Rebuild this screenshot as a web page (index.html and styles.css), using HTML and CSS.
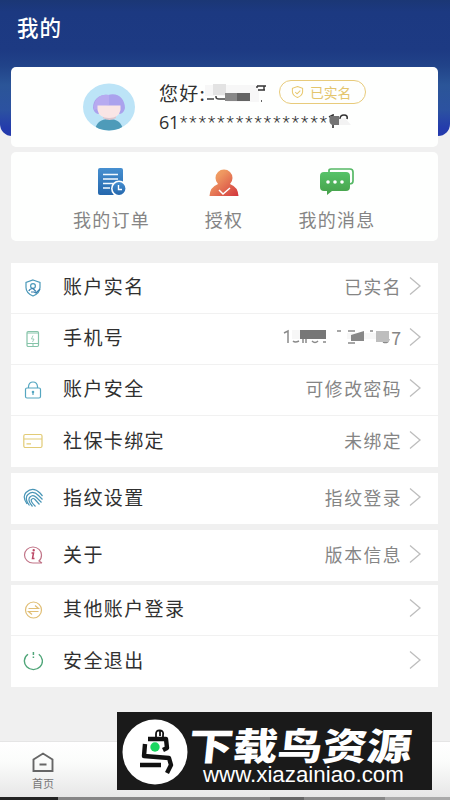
FILE: index.html
```
<!DOCTYPE html>
<html lang="zh-CN">
<head>
<meta charset="UTF-8">
<title>我的</title>
<link rel="stylesheet" href="styles.css">
</head>
<body>
<svg class="defs" width="0" height="0">
  <defs>
    <linearGradient id="blue" x1="0" y1="0" x2="0" y2="1"><stop offset="0" stop-color="#468fd0"/><stop offset="1" stop-color="#2467ac"/></linearGradient>
    <linearGradient id="red" x1="0" y1="0" x2="1" y2="1"><stop offset="0" stop-color="#f3a763"/><stop offset=".3" stop-color="#ee9660"/><stop offset="1" stop-color="#d2353c"/></linearGradient>
    <linearGradient id="green" x1="0" y1="0" x2="0" y2="1"><stop offset="0" stop-color="#57c269"/><stop offset="1" stop-color="#45a049"/></linearGradient>
    <symbol id="arrow" viewBox="0 0 12 20"><path d="M1 1.500 11 10 1 18.500" fill="none" stroke="#bdbdbd" stroke-width="1.300"/></symbol>
  </defs>
</svg>
<div class="screen">
  <header class="hero"><h1>我的</h1></header>
  <main>
    <section class="card profile">
      <svg class="avatar" viewBox="0 0 52 48">
        <clipPath id="face"><ellipse cx="26" cy="24" rx="26" ry="23.5"/></clipPath>
        <g clip-path="url(#face)">
          <rect width="52" height="48" fill="#bce4f7"/>
          <path d="M12 48Q13 36 26 36T40 48Z" fill="#4e9bb9"/>
          <path d="M20 31h13v4q-6.500 4-13 0z" fill="#dcc6ce"/>
          <path d="M10 25C10 16 17 11 25 12C35 9 42 16 42 25Q41 30 37 31H15Q11 30 10 25Z" fill="#aaa2ed"/>
          <path d="M26 12Q16 10 12 19Q10 23 11 27L26 22Z" fill="#b7aaf0"/>
          <path d="M14.500 22.500H37.500V27Q36 35 26 35T14.500 27Z" fill="#f9e5e5"/>
        </g>
      </svg>
      <div class="identity">
        <div class="nameline">
          <span class="hello">您好:</span>
          <svg class="name-mask" viewBox="0 0 64 22">
            <path d="M4 13h6M4 17h7M13 10v5q0 2 3 2h6" stroke="#444" stroke-width="1.500" fill="none"/>
            <path d="M2 3h54v17H24v-6H2z" fill="#f7f7f7"/>
            <rect x="10" y="2" width="13" height="11" fill="#e3e3e3"/>
            <rect x="22" y="11" width="25" height="8" fill="#888"/><rect x="34" y="11" width="13" height="8" fill="#646464"/>
            <path d="M54 4h9M55 8h7M54 4v2M61 4v4M58 19h1" stroke="#333" stroke-width="1.400" fill="none"/>
          </svg>
          <span class="verified"><svg viewBox="0 0 14 14"><path d="M7 1 12.500 3v4Q12 11 7 13 2 11 1.500 7V3Z M4.500 7l2 2 3.500-3.500" fill="none" stroke="#e8c76c" stroke-width="1.100"/></svg>已实名</span>
        </div>
        <div class="idline"><span>61</span><span class="stars">****************</span><svg viewBox="0 0 24 16"><path d="M2 3l4-2v13M13 5q0-4 4-4t3 4" fill="none" stroke="#333" stroke-width="1.600"/><path d="M3 2h9v9H5q-4-2-2-9z" fill="#747474"/><path d="M12 5l6-1 6 7H12z" fill="#f3f3f3"/></svg></div>
      </div>
    </section>
    <section class="card actions">
      <div class="action orders"><svg viewBox="0 0 30 30"><rect x="1" y="1" width="25" height="27" rx="2" fill="url(#blue)"/><path d="M6 7.500h15M6 12h15M6 16.500h10M6 21h7" stroke="#f4faff" stroke-width="1.500"/><circle cx="22" cy="21.500" r="8" fill="#fff"/><circle cx="22" cy="21.500" r="6.400" fill="url(#blue)"/><path d="M21.500 18v4.500H25" fill="none" stroke="#fff" stroke-width="1.400"/></svg><span>我的订单</span></div>
      <div class="action grant"><svg viewBox="0 0 30 30"><path d="M0.500 29Q1 20 9 17A8.500 8.500 0 1 1 21 17Q29 20 29.500 29Z" fill="url(#red)"/><path d="M10 23l4 4 7-6" fill="none" stroke="#fff" stroke-width="1.500"/></svg><span>授权</span></div>
      <div class="action messages"><svg viewBox="0 0 36 30"><path d="M10 5V3.500Q10 2 12 2h19q3 0 3 3v9q0 3-4 3" fill="none" stroke="#56b966" stroke-width="1.700"/><path d="M5 5h22q4 0 4 4v11q0 4-4 4H13l-5 4v-4H5q-4 0-4-4V9q0-4 4-4z" fill="url(#green)"/><g fill="#fff"><circle cx="9" cy="15" r="1.800"/><circle cx="16" cy="15" r="1.800"/><circle cx="23" cy="15" r="1.800"/></g></svg><span>我的消息</span></div>
    </section>
    <section class="group first">
      <div class="row"><svg class="icon" viewBox="0 0 20 20" stroke="#4b99b9"><path d="M10 2 17 4.500v5Q17 15 10 18 3 15 3 9.500v-5Z"/><circle cx="10" cy="8" r="2.400"/><path d="M5.800 13Q7 10.500 10 10.500L13 13.500M8 14h3l2 1 4-4" stroke="#397fad"/></svg><span class="label">账户实名</span><span class="value">已实名</span><svg class="arrow"><use href="#arrow"/></svg></div>
      <div class="row"><svg class="icon" viewBox="0 0 20 20" stroke="#86c4a9"><rect x="4" y="2.500" width="11.500" height="15" rx="1.200"/><path d="M4 4h11.500M4 14.500h11.500M9 16h2" /><path d="M10 6.500 8.500 10H11l-1.500 3" stroke-width=".8"/></svg><span class="label">手机号</span>
        <svg class="phone-mask" viewBox="0 0 108 20"><path d="M1 6l4-2v12M10 14q2 2 6 0M20 12v4M23 12v4M29 14q3 3 6 0M40 15h3M54 4h4M65 4h7M65 16h7M87 4h3M100 15q5 2 6-3" fill="none" stroke="#8a8a8a" stroke-width="1.500"/><path d="M9 3h34v9H9zM64 6h32v6H64z" fill="#f7f7f7"/><rect x="17" y="3" width="26" height="9" fill="#777"/><path d="M68 8l13-4v10H68z" fill="#888"/><rect x="93" y="4" width="13" height="11" fill="#bebebe"/></svg>
        <span class="digit">7</span><svg class="arrow"><use href="#arrow"/></svg></div>
      <div class="row"><svg class="icon" viewBox="0 0 20 20" stroke="#55a6c0"><rect x="2.500" y="8" width="15" height="10" rx="1.500"/><path d="M5.500 8V6.500Q6 2 10 2t4.500 4.500V8M10 12v3"/><circle cx="10" cy="12" r=".7"/></svg><span class="label">账户安全</span><span class="value">可修改密码</span><svg class="arrow"><use href="#arrow"/></svg></div>
      <div class="row"><svg class="icon" viewBox="0 0 20 20" stroke="#e2cb76"><rect x=".8" y="3.500" width="18.200" height="13" rx="1.500"/><path d="M1 8h18M3.500 12.800h4.500"/></svg><span class="label">社保卡绑定</span><span class="value">未绑定</span><svg class="arrow"><use href="#arrow"/></svg></div>
    </section>
    <section class="group finger">
      <div class="row"><svg class="icon" viewBox="0 0 20 20" stroke="#4995b6"><path d="M4 16Q-1 9 3 4.500Q10-2 17 5L19.500 8M6.500 17.500Q1 10 5 6.500Q10 2 15.500 7.500L19.500 11.500M9.500 18.500Q4 12 7 9Q10 6 13.500 9.500L18.500 14.500M12.500 18.500Q7 13 8.500 11.500Q10 9.500 12 11.500L16.500 16.500"/></svg><span class="label">指纹设置</span><span class="value">指纹登录</span><svg class="arrow"><use href="#arrow"/></svg></div>
    </section>
    <section class="group about">
      <div class="row"><svg class="icon" viewBox="0 0 20 20" stroke="#c17588"><path d="M19 18H10A8.500 8 0 1 1 18.500 10Q18.500 14 16 16L19 18"/><path d="M8.500 8H10.500L9.500 13.500H11.500" stroke="#bc4866" stroke-width="1.500"/><circle cx="10.700" cy="5.300" r=".6" stroke="#bc4866"/></svg><span class="label">关于</span><span class="value">版本信息</span><svg class="arrow"><use href="#arrow"/></svg></div>
    </section>
    <section class="group last">
      <div class="row"><svg class="icon" viewBox="0 0 20 20" stroke="#e0be75"><circle cx="10.500" cy="10" r="8"/><path d="M5.500 8.500h10L12 5.500M15.500 11.500h-10L9 14.500"/></svg><span class="label">其他账户登录</span><svg class="arrow"><use href="#arrow"/></svg></div>
      <div class="row"><svg class="icon" viewBox="0 0 20 20" stroke="#4fa578"><path d="M5 3.300A9 8.500 0 1 0 15.800 3.300" stroke-width="1.400"/><path d="M10.400 1v3M10.400 5.500v1.500" stroke-width="1.500"/></svg><span class="label">安全退出</span><svg class="arrow"><use href="#arrow"/></svg></div>
    </section>
  </main>
  <nav class="tabs"><div class="tab"><svg viewBox="0 0 22 21"><path d="M1.500 7.500 11 1.500l9.500 6V19h-19ZM7.500 12.500h7" fill="none" stroke="#666" stroke-width="1.900"/></svg><span>首页</span></div></nav>
  <div class="edge"></div>
  <div class="banner">
    <svg class="bird" viewBox="0 0 66 66"><circle cx="33" cy="33" r="32.500" fill="#fff"/><g fill="none" stroke="#111" stroke-linejoin="round"><path d="M34 18v-3q0-4 4-3.500t3 4.500v3M38 12v5" stroke-width="1.800"/><path d="M26 20H44L45 29 41 31M23 25 22 37 47 39 49 46 45 54M18 46H39" stroke-width="4.400"/></g><circle cx="33" cy="28" r="4.700" fill="#1bd760"/></svg>
    <div class="brand"><strong>下载鸟资源</strong><span>www.xiazainiao.com</span></div>
  </div>
</div>
</body>
</html>
```
FILE: styles.css
```
* { box-sizing: border-box; }
body { margin: 0; background: #f0f0f0; font-family: "Noto Sans CJK SC", sans-serif; color: #303030; }
svg { display: block; flex: none; }
.defs { position: absolute; }
.screen { position: relative; width: 450px; height: 800px; overflow: hidden; display: flex; flex-direction: column; }
.hero { flex: none; height: 136px; margin-bottom: -69px; padding: 11px 17px; border-radius: 0 0 12px 12px; background: linear-gradient(#1b3775 0, #1c3981 12px, #1d3a83 50px, #214389 66px, #2b5598 85px, #2c52a0 110px, #243cac 128px, #2439ad 136px); }
h1 { margin: 0; color: #fff; font-size: 21.5px; line-height: 32px; letter-spacing: 1px; font-weight: 500; }
main { position: relative; padding: 0 12px 0 11px; }
.card { background: #fefffe; border-radius: 5px; }
.profile { height: 80px; display: flex; padding: 16px 0 0 72px; }
.avatar { width: 52px; height: 48px; }
.identity { padding-left: 24px; }
.nameline { display: flex; height: 23px; margin-top: -3px; }
.hello { width: 44px; font-size: 19px; line-height: 25px; letter-spacing: 1.2px; white-space: nowrap; }
.name-mask { width: 64px; height: 22px; margin-top: 2px; }
.verified { display: flex; align-items: center; width: 87px; height: 24px; margin-left: 12px; padding-left: 11px; border: 1.3px solid #e8cb7b; border-radius: 12px; color: #e4c56d; font-size: 13.8px; line-height: 20px; padding-bottom: 1px; letter-spacing: 0; white-space: nowrap; }
.verified svg { width: 13px; height: 14px; margin-right: 6px; }
.idline { display: flex; height: 28px; margin-top: 5px; font-size: 18px; line-height: 28px; }
.idline > span:first-child { width: 21px; font-size: 18px; letter-spacing: -.3px; font-family: "Open Sans", sans-serif; }
.stars { width: 148px; font-family: Roboto, sans-serif; font-weight: 300; color: #303030; font-size: 17px; letter-spacing: 2.1px; white-space: nowrap; }
.idline svg { width: 24px; height: 16px; margin: 6px 0 0 -1px; }
.actions { height: 89px; margin-top: 5px; display: grid; grid-template-columns: 75px 1fr 76px; padding: 15px 63px 0; }
.action { display: flex; flex-direction: column; align-items: center; color: #858585; font-size: 18px; line-height: 26px; letter-spacing: 1.3px; white-space: nowrap; }
.action svg { width: 30px; height: 30px; margin-bottom: 9px; }
.messages svg { width: 36px; }
.group { background: #fff; }
.first { margin-top: 22px; }
.finger { margin-top: 6px; }
.about { margin-top: 6px; }
.last { margin-top: 4px; }
.row { display: flex; align-items: center; height: 51px; padding: 0 17px 4px 12px; border-bottom: 1px solid #f1f1f1; }
.row:last-child { border-bottom: 0; }
.icon { width: 20px; height: 20px; margin-top: 3px; fill: none; stroke-width: 1.200; }
.label { flex: 1; margin-left: 20px; font-size: 19px; letter-spacing: 1.4px; line-height: 28px; white-space: nowrap; }
.value, .digit { color: #858585; font-size: 17.8px; letter-spacing: 1.5px; line-height: 26px; margin-right: 7px; white-space: nowrap; }
.digit { letter-spacing: 0; margin: 0 8px 0 0; }
.phone-mask { width: 108px; height: 20px; }
.arrow { width: 12px; height: 20px; }
.tabs { position: absolute; left: 0; right: 0; bottom: 3px; height: 56px; padding: 10px 0 0 32px; border-top: 1px solid #e5e5e5; background: linear-gradient(#fff 0, #fbfcfb 20px, #e6e6e6 56px); }
.tab { width: 22px; display: flex; flex-direction: column; align-items: center; color: #777; font-size: 11px; line-height: 14px; white-space: nowrap; }
.tab svg { width: 22px; height: 21px; margin-bottom: 3px; }
.edge { position: absolute; left: 0; right: 0; bottom: 0; height: 3px; background: linear-gradient(90deg, #222 58px, #858585 58px, #858585 270px, #666 270px, #666 304px, #888 304px, #888 385px, #aaa 385px); }
.banner { position: absolute; left: 117px; top: 712px; width: 315px; height: 78px; display: flex; background: #1a1a1a; color: #fff; }
.bird { width: 66px; height: 66px; margin: 7px 0 0 5px; }
.brand { display: flex; flex-direction: column; }
.brand strong { width: 200px; font-size: 36px; line-height: 42px; height: 41px; margin: 10px 0 0 1px; font-weight: 900; transform: scale(1.24, 1.04) skewX(-5deg); transform-origin: 0 50%; letter-spacing: 0; white-space: nowrap; }
.brand span { font: 22.3px/26px "Liberation Sans", sans-serif; margin: -1px 0 0 15px; white-space: nowrap; }
```
